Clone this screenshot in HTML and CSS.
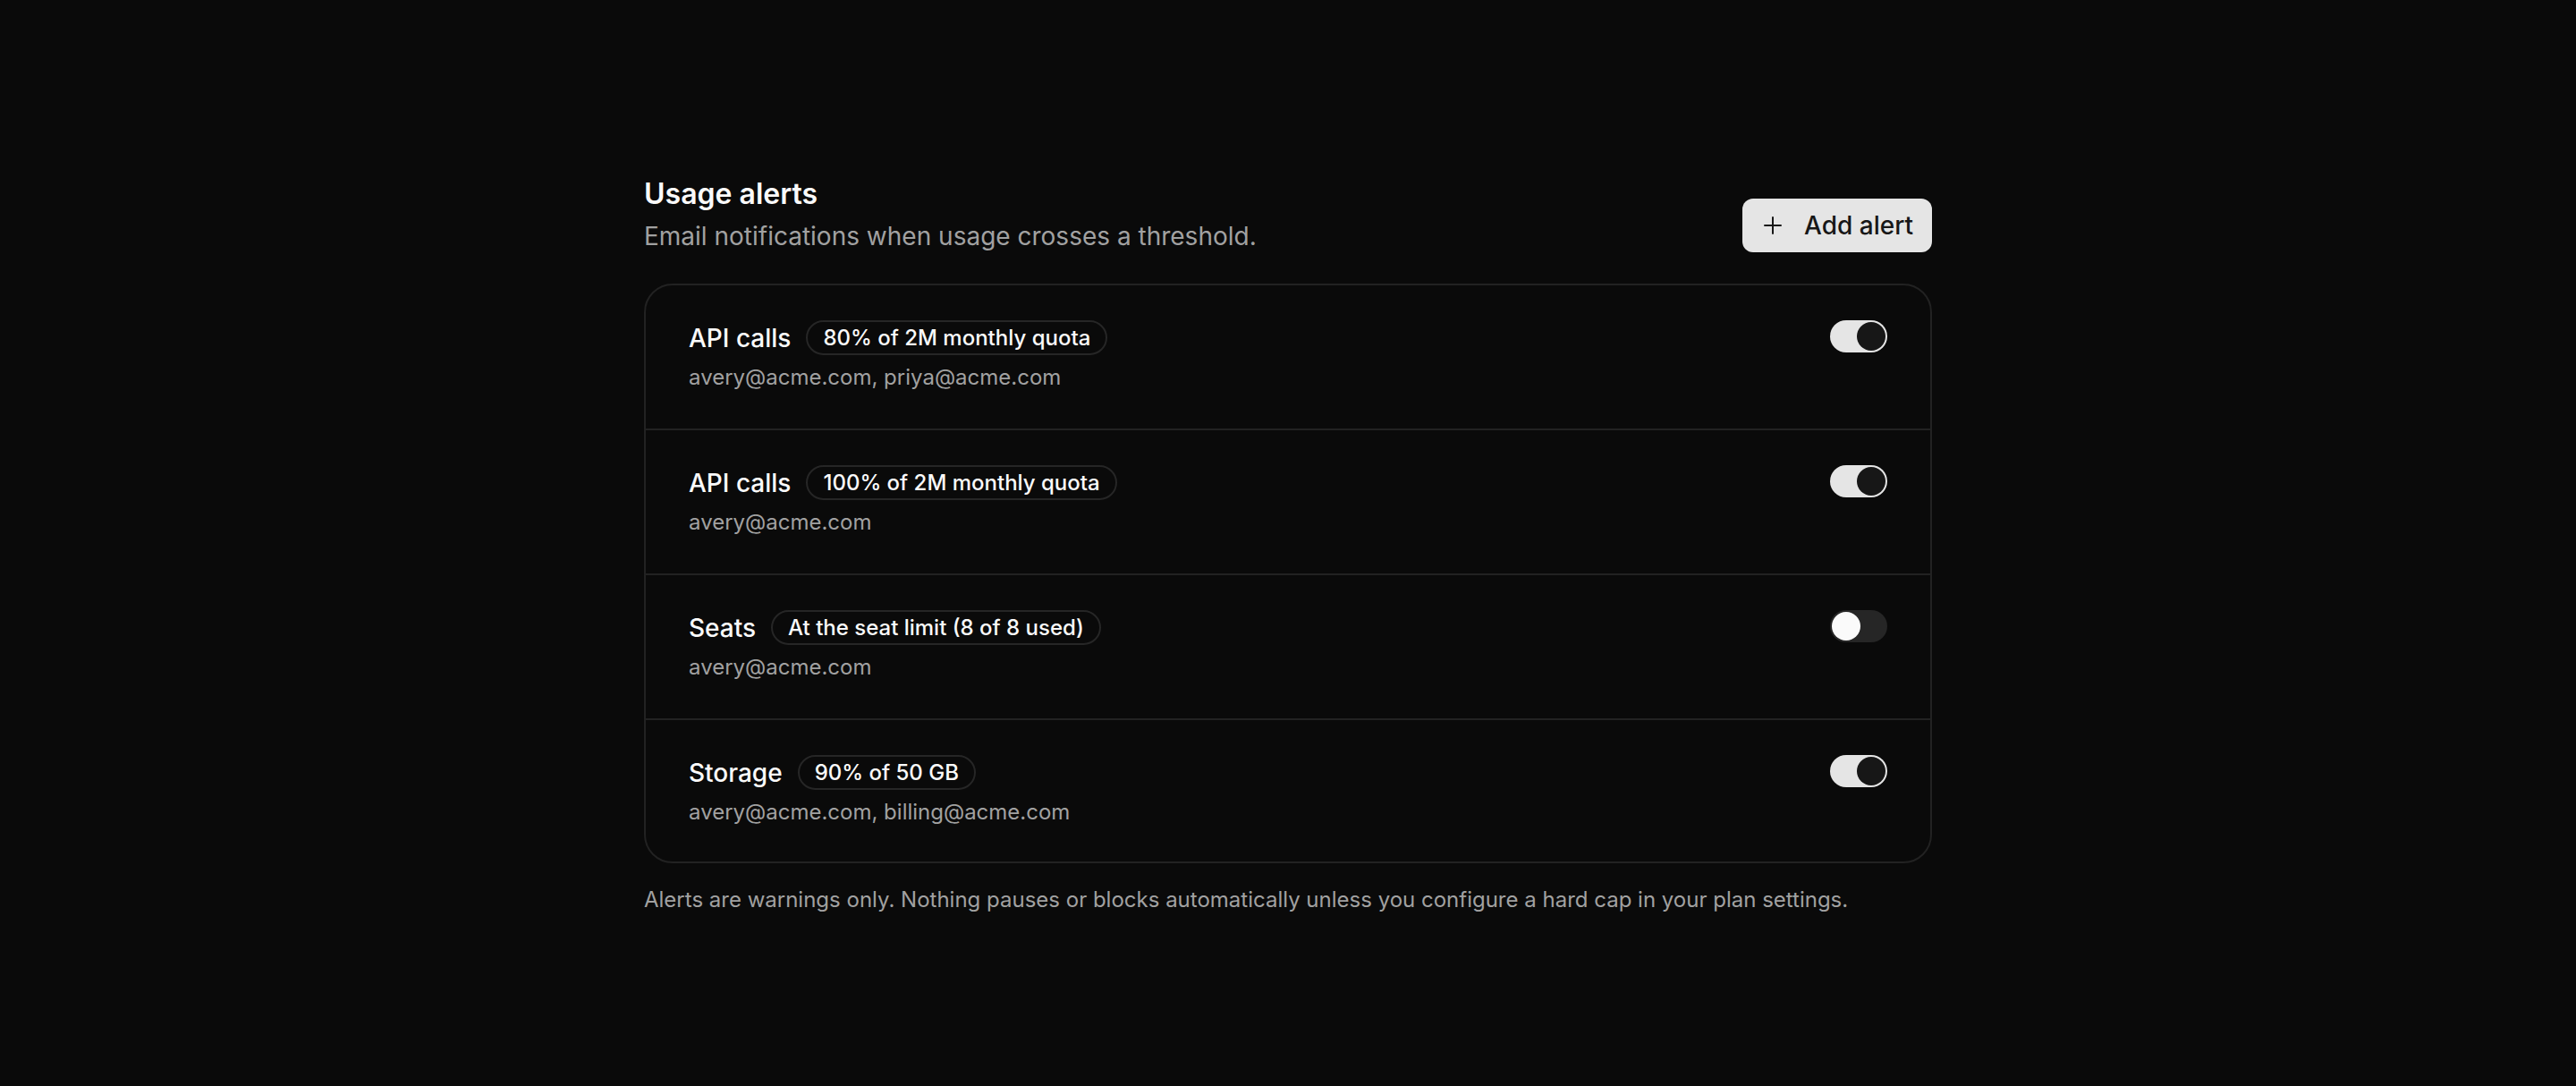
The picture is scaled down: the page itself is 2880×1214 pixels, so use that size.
FILE: index.html
```html
<!DOCTYPE html>
<html lang="en">
<head>
    <meta charset="UTF-8">
    <meta name="viewport" content="width=device-width, initial-scale=1.0">
    <title>Usage alerts</title>
    <link rel="stylesheet" href="styles.css">
</head>
<body>
    <main class="panel">
        <header class="cabecera">
            <div>
                <h1 class="titulo">Usage alerts</h1>
                <p class="subtitulo">Email notifications when usage crosses a threshold.</p>
            </div>
            <button class="boton-agregar">
                <svg width="20" height="20" viewBox="0 0 20 20" fill="none" stroke="currentColor" stroke-width="2" stroke-linecap="round">
                    <path d="M10 1v18M1 10h18"/>
                </svg>
                Add alert
            </button>
        </header>

        <section class="lista">
            <div class="alerta">
                <div class="info">
                    <div class="linea">
                        <span class="nombre">API calls</span>
                        <span class="etiqueta">80% of 2M monthly quota</span>
                    </div>
                    <div class="correos">avery@acme.com, priya@acme.com</div>
                </div>
                <button class="interruptor activo"></button>
            </div>
            <div class="alerta">
                <div class="info">
                    <div class="linea">
                        <span class="nombre">API calls</span>
                        <span class="etiqueta">100% of 2M monthly quota</span>
                    </div>
                    <div class="correos">avery@acme.com</div>
                </div>
                <button class="interruptor activo"></button>
            </div>
            <div class="alerta">
                <div class="info">
                    <div class="linea">
                        <span class="nombre">Seats</span>
                        <span class="etiqueta">At the seat limit (8 of 8 used)</span>
                    </div>
                    <div class="correos">avery@acme.com</div>
                </div>
                <button class="interruptor"></button>
            </div>
            <div class="alerta">
                <div class="info">
                    <div class="linea">
                        <span class="nombre">Storage</span>
                        <span class="etiqueta">90% of 50 GB</span>
                    </div>
                    <div class="correos">avery@acme.com, billing@acme.com</div>
                </div>
                <button class="interruptor activo"></button>
            </div>
        </section>

        <p class="nota">Alerts are warnings only. Nothing pauses or blocks automatically unless you configure a hard cap in your plan settings.</p>
    </main>

    <script>
        document.querySelectorAll('.interruptor').forEach(boton => {
            boton.addEventListener('click', () => {
                boton.classList.toggle('activo');
            });
        });
    </script>
</body>
</html>
```

FILE: styles.css
```css
body {
    margin: 0;
    background-color: #0a0a0a;
    color: #fafafa;
    font-family: Inter, "Noto Sans", sans-serif;
}
.panel {
    width: 1440px;
    margin: 0 auto;
    padding-top: 197px;
}
.cabecera {
    display: flex;
    justify-content: space-between;
    align-items: flex-end;
    margin-bottom: 33px;
}
.titulo {
    margin: 0;
    font-size: 32px;
    line-height: 39px;
    font-weight: 600;
}
.subtitulo {
    margin: 8px 0 0;
    font-size: 28px;
    line-height: 40px;
    color: #a1a1a1;
}
.boton-agregar {
    display: flex;
    align-items: center;
    gap: 25px;
    height: 60px;
    padding: 0 21px 0 24px;
    margin-bottom: 2px;
    border: none;
    border-radius: 12px;
    background-color: #e5e5e5;
    color: #171717;
    font-family: inherit;
    font-size: 28px;
    font-weight: 500;
    cursor: pointer;
}
.lista {
    border: 2px solid #222;
    border-radius: 32px;
}
.alerta {
    display: flex;
    justify-content: space-between;
    align-items: flex-start;
    padding: 39px 48px 39px;
    border-top: 2px solid #222;
}
.alerta:first-child {
    border-top: none;
}
.alerta:last-child {
    padding-bottom: 37px;
}
.linea {
    display: flex;
    align-items: center;
    gap: 17px;
}
.nombre {
    font-size: 28px;
    font-weight: 500;
}
.etiqueta {
    padding: 0 17px;
    border: 2px solid #262626;
    border-radius: 999px;
    font-size: 24px;
    line-height: 35px;
    font-weight: 500;
}
.correos {
    margin-top: 7px;
    font-size: 24px;
    line-height: 36px;
    color: #a1a1a1;
}
.interruptor {
    position: relative;
    width: 64px;
    height: 36px;
    padding: 0;
    border: none;
    border-radius: 18px;
    background-color: #262626;
    cursor: pointer;
    transition: background 0.2s;
}
.interruptor::after {
    content: "";
    position: absolute;
    top: 2px;
    left: 2px;
    width: 32px;
    height: 32px;
    border-radius: 50%;
    background-color: #fafafa;
    transition: left 0.2s;
}
.interruptor.activo {
    background-color: #e5e5e5;
}
.interruptor.activo::after {
    left: 30px;
    background-color: #171717;
}
.nota {
    margin: 23px 0 0;
    font-size: 24px;
    line-height: 36px;
    color: #a1a1a1;
}
```
